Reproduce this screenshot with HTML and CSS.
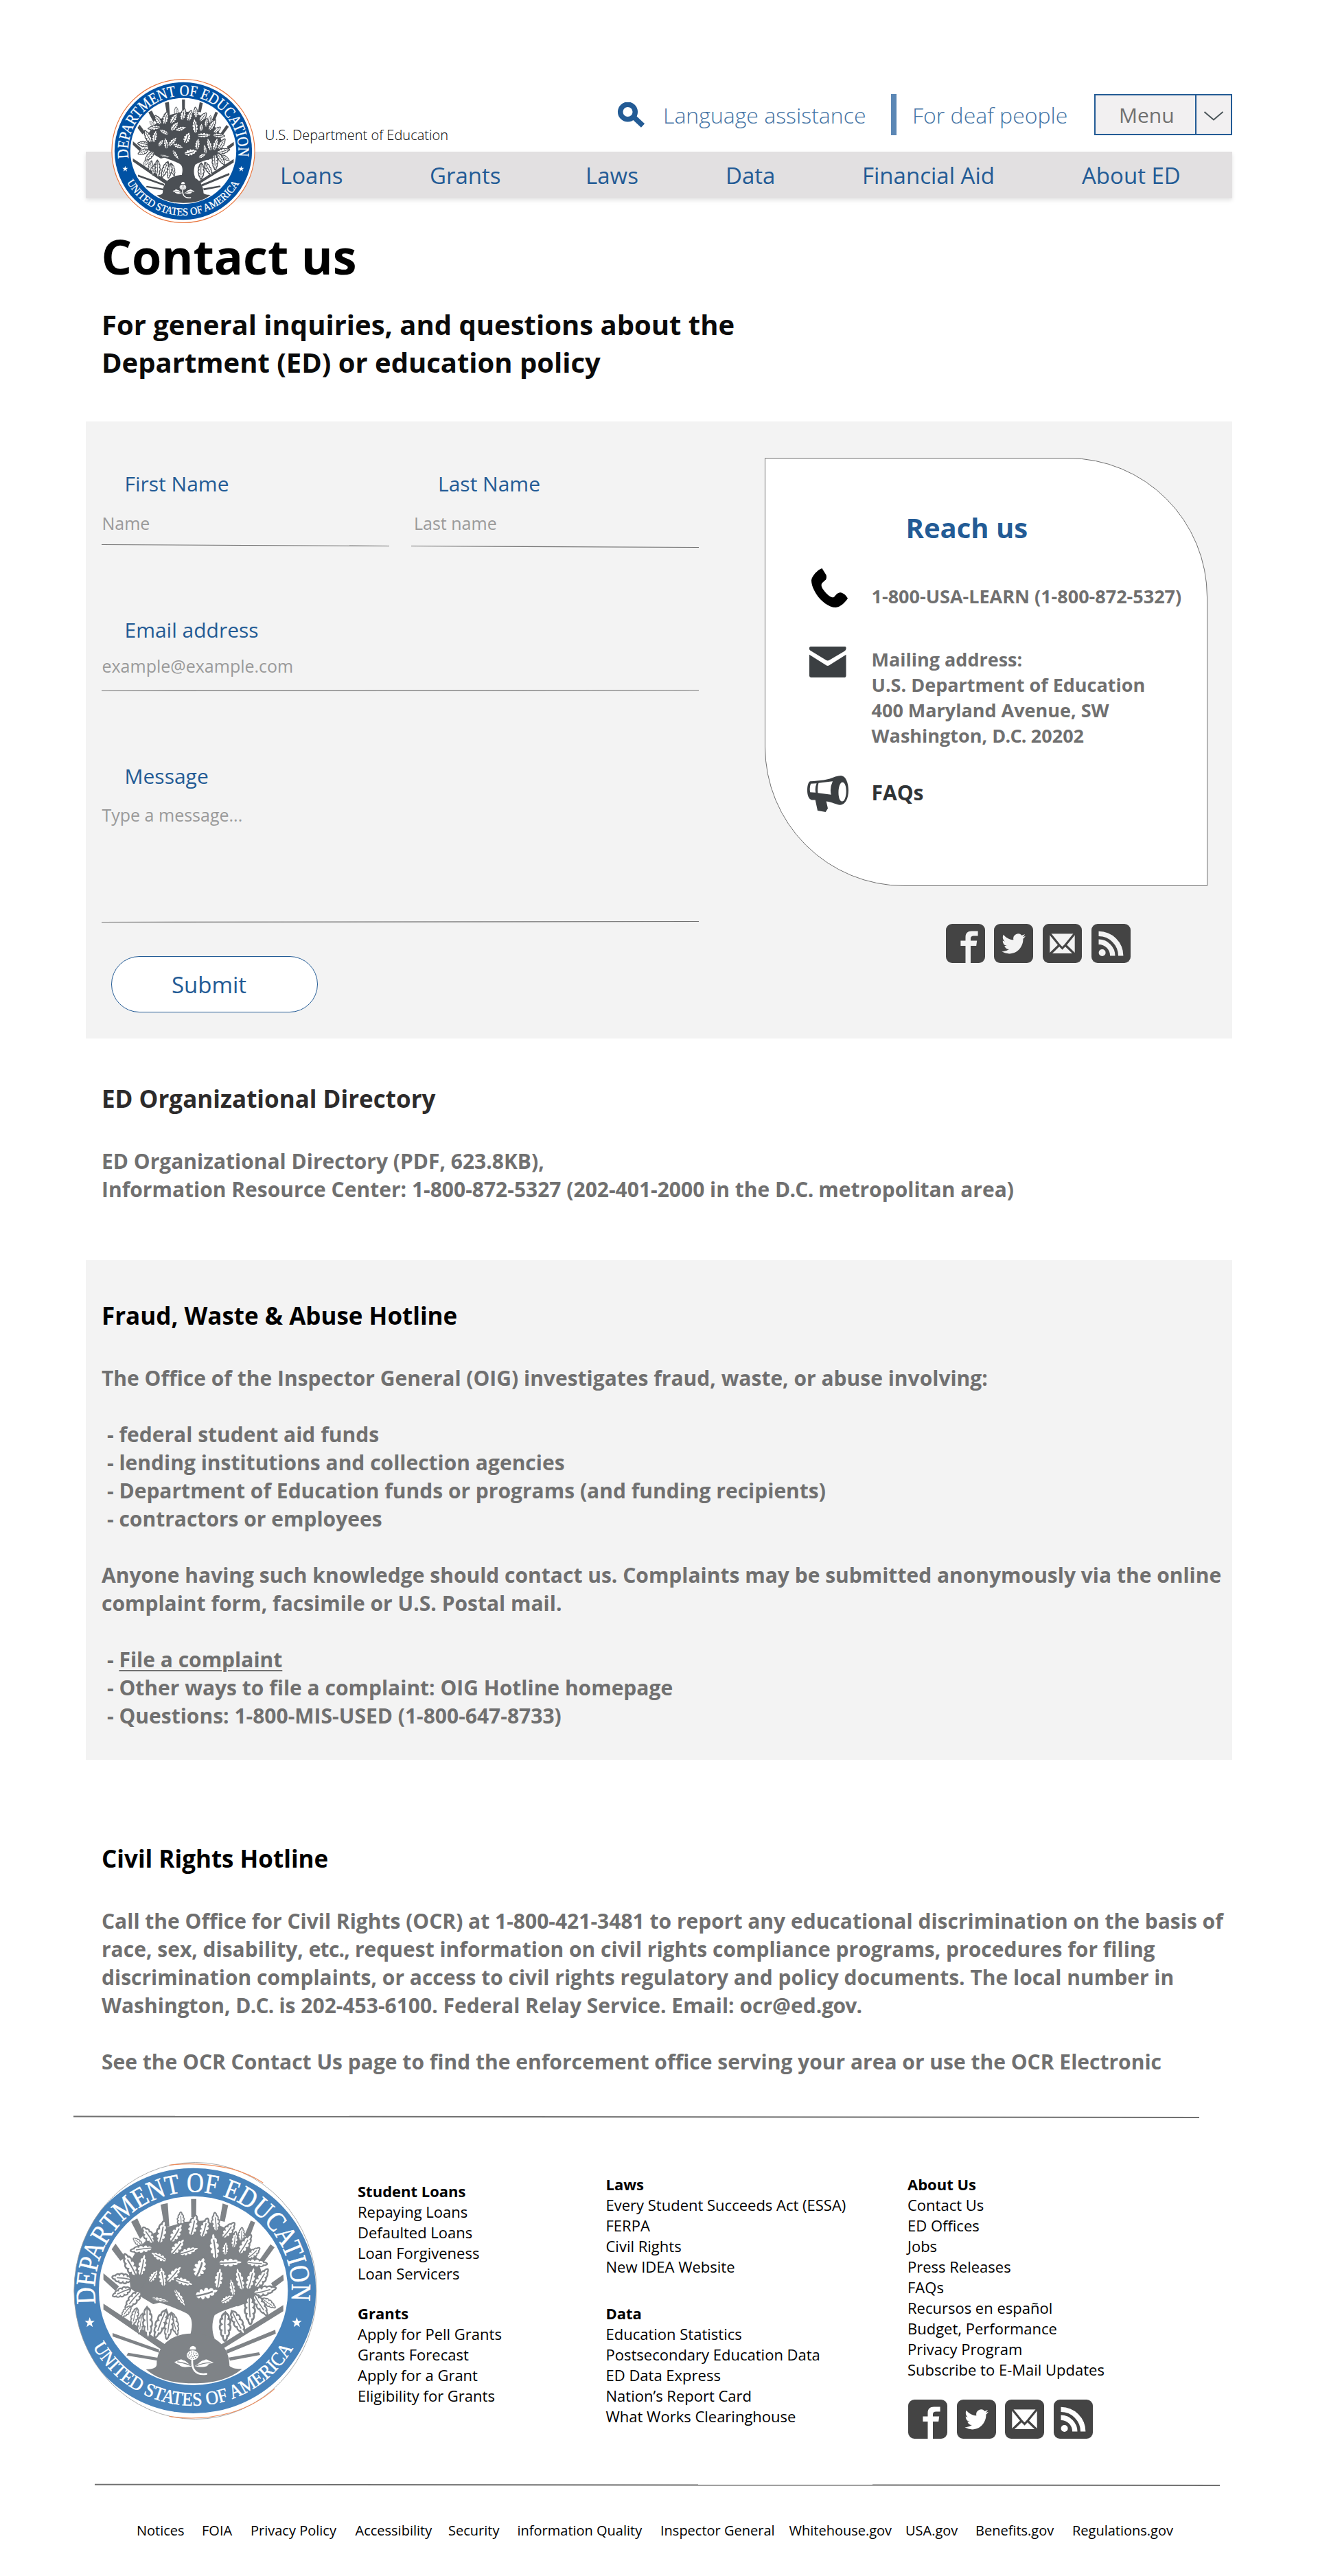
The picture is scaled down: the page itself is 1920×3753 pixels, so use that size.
FILE: index.html
```
<!DOCTYPE html>
<html lang="en">
<head>
<meta charset="utf-8">
<title>Contact us - U.S. Department of Education</title>
<link rel="stylesheet" href="styles.css">
</head>
<body>

<svg class="sprite" aria-hidden="true">
  <defs>
    <path id="arc-top" d="M149 708 A430 430 0 1 1 1001 708"/>
    <path id="arc-bottom" d="M136 896 A503 503 0 0 0 1014 896"/>
    <g id="leaf">
      <path class="leaf-shape" d="M0 50C-8 42-20 40-14 28C-26 26-24 12-17 8C-28 2-24-12-16-14C-22-24-14-34-9-34C-10-42-4-50 0-50C4-50 10-42 9-34C14-34 22-24 16-14C24-12 28 2 17 8C24 12 26 26 14 28C20 40 8 42 0 50Z"/>
      <path class="leaf-rib" d="M0 50Q4 10 0-26"/>
    </g>
    <path id="star" d="M0-23 5.5-7H22L9 3.500 13.500 20 0 10-13.500 20-9 3.500-22-7H-5.500Z"/>
    <g id="seal">
      <circle cx="575" cy="651" r="536" fill="var(--band)"/>
      <circle cx="575" cy="651" r="413" fill="#fff"/>
      <g fill="var(--tree)">
        <path d="M565 250H588L587 330H566ZM432 275L463 268 470 370 448 370ZM703 270L727 278 712 350 690 345ZM303 350L330 335 362 405 342 425ZM826 345L845 352 820 420 798 410ZM235 445L218 470 256 520 278 505ZM912 448L930 462 880 530 865 515ZM182 575V603L235 652 250 632ZM968 580L970 606 925 640 915 618ZM182 708V733L440 912 455 888ZM968 714V741L695 910 690 890ZM222 836V851L425 922 425 908ZM933 822L935 839 722 926 718 910ZM290 922L283 934 418 957 420 944ZM862 920L867 932 735 957 730 943Z"/>
        <path d="M300 640L290 540 330 470 400 400 470 370 540 350 620 345 700 370 790 420 850 500 870 560 880 650 830 690 800 705 770 720 700 700 620 720 560 710 480 690 400 710 350 680Z"/>
        <path d="M560 850C574 800 572 765 545 750C505 728 450 712 395 690L340 655 370 600 560 640 700 640 850 650 830 700C775 715 700 735 668 758C655 790 655 830 668 860Z"/>
        <path d="M368 995C395 995 415 990 415 972C415 900 470 838 570 838C680 838 733 900 733 980C745 992 770 993 788 993C730 1040 660 1056 575 1056C490 1056 420 1040 368 995Z"/>
      </g>
      <g>
        <use href="#leaf" transform="translate(520 340) scale(.65)"/>
        <use href="#leaf" transform="translate(785 405) rotate(5) scale(.6)"/>
        <use href="#leaf" transform="translate(672 352) rotate(-4) scale(.72 .85)"/>
        <use href="#leaf" transform="translate(728 388) rotate(38) scale(.85)"/>
        <use href="#leaf" transform="translate(574 368) rotate(14) scale(.95)"/>
        <use href="#leaf" transform="translate(624 378) rotate(17) scale(.9)"/>
        <use href="#leaf" transform="translate(378 410) rotate(-32) scale(.85)"/>
        <use href="#leaf" transform="translate(437 397) rotate(13) scale(.95 1.05)"/>
        <use href="#leaf" transform="translate(500 400) rotate(32) scale(.95)"/>
        <use href="#leaf" transform="translate(332 438) rotate(-50) scale(.5)"/>
        <use href="#leaf" transform="translate(350 470) rotate(-97) scale(.75 1)"/>
        <use href="#leaf" transform="translate(506 460) rotate(40) scale(.9)"/>
        <use href="#leaf" transform="translate(555 478) rotate(72) scale(.75 .9)"/>
        <use href="#leaf" transform="translate(755 430) rotate(8) scale(.6 .75)"/>
        <use href="#leaf" transform="translate(667 458) rotate(-6) scale(1 1.2)"/>
        <use href="#leaf" transform="translate(715 468) rotate(5) scale(.6)"/>
        <use href="#leaf" transform="translate(800 450) rotate(32) scale(.85 1)"/>
        <use href="#leaf" transform="translate(838 487) rotate(50) scale(.7)"/>
        <use href="#leaf" transform="translate(735 528) rotate(88) scale(.85 1.100)"/>
        <use href="#leaf" transform="translate(850 530) rotate(95) scale(.75 .95)"/>
        <use href="#leaf" transform="translate(425 503) rotate(-62) scale(.7 .8)"/>
        <use href="#leaf" transform="translate(604 550) rotate(22) scale(1.300 .95)"/>
        <use href="#leaf" transform="translate(300 540) rotate(-28) scale(.95 1.100)"/>
        <use href="#leaf" transform="translate(352 540) rotate(12) scale(.85 1)"/>
        <use href="#leaf" transform="translate(262 597) rotate(-82) scale(.9 .85)"/>
        <use href="#leaf" transform="translate(400 588) rotate(35) scale(.65)"/>
        <use href="#leaf" transform="translate(440 592) rotate(-8) scale(.8 .9)"/>
        <use href="#leaf" transform="translate(490 580) rotate(42) scale(.85 .95)"/>
        <use href="#leaf" transform="translate(533 612) rotate(108) scale(.75 .85)"/>
        <use href="#leaf" transform="translate(632 662) rotate(76) scale(1.200 1.100)"/>
        <use href="#leaf" transform="translate(686 598) rotate(8) scale(.85 .95)"/>
        <use href="#leaf" transform="translate(778 602) rotate(-14) scale(.8 1.050)"/>
        <use href="#leaf" transform="translate(826 600) rotate(16) scale(.85 1.050)"/>
        <use href="#leaf" transform="translate(872 598) rotate(34) scale(.85 1)"/>
        <use href="#leaf" transform="translate(885 652) rotate(76) scale(.85 1.050)"/>
        <use href="#leaf" transform="translate(745 638) rotate(-10) scale(.55 .8)"/>
        <use href="#leaf" transform="translate(262 658) rotate(-112) scale(.8 .85)"/>
        <use href="#leaf" transform="translate(312 690) rotate(-138) scale(.85 1)"/>
        <use href="#leaf" transform="translate(515 680) rotate(148) scale(.55 .9)"/>
        <use href="#leaf" transform="translate(430 690) rotate(102) scale(.35 .8)"/>
        <use href="#leaf" transform="translate(722 688) rotate(60) scale(.65)"/>
        <use href="#leaf" transform="translate(282 742) rotate(-140) scale(.6)"/>
        <use href="#leaf" transform="translate(318 765) rotate(-165) scale(.65 .8)"/>
        <use href="#leaf" transform="translate(345 795) rotate(-170) scale(.55 .9)"/>
        <use href="#leaf" transform="translate(375 790) rotate(178) scale(.85 1.350)"/>
        <use href="#leaf" transform="translate(492 795) rotate(165) scale(.7 1)"/>
        <use href="#leaf" transform="translate(432 795) rotate(202) scale(.9 1.300)"/>
        <use href="#leaf" transform="translate(468 805) rotate(190) scale(.75 1.150)"/>
        <use href="#leaf" transform="translate(904 705) rotate(125) scale(.6 .7)"/>
        <use href="#leaf" transform="translate(868 712) rotate(148) scale(.8 1.100)"/>
        <use href="#leaf" transform="translate(822 735) rotate(178) scale(.95 1.250)"/>
        <use href="#leaf" transform="translate(770 790) rotate(152) scale(.85 1.150)"/>
        <use href="#leaf" transform="translate(714 808) rotate(181) scale(1 1.250)"/>
      </g>
      <g class="acorn">
        <path d="M559 908A14 16 0 0 1 587 908Z" fill="#fff"/>
        <ellipse cx="572" cy="933" rx="26" ry="21" fill="#fff"/>
        <ellipse cx="572" cy="933" rx="19" ry="14" fill="none" stroke="var(--tree)" stroke-width="5" stroke-dasharray="4 6"/>
        <ellipse cx="572" cy="933" rx="9" ry="6" fill="none" stroke="var(--tree)" stroke-width="5" stroke-dasharray="4 5"/>
        <path d="M570 955C568 990 580 1022 632 1015" fill="none" stroke="#fff" stroke-width="8" stroke-linecap="round"/>
        <path d="M568 978C550 972 545 955 530 955C518 945 512 958 492 962C500 972 512 972 518 980C538 990 552 982 568 982ZM584 978C600 972 606 955 622 955C634 945 640 958 664 965C652 970 642 968 636 980C616 988 600 984 584 982Z" fill="#fff"/>
        <path d="M505 962Q540 966 566 980M588 980Q615 966 650 966" fill="none" stroke="var(--tree)" stroke-width="4"/>
      </g>
      <use href="#star" x="122" y="790" fill="#fff"/>
      <use href="#star" x="1027" y="790" fill="#fff"/>
      <text class="seal-top"><textPath href="#arc-top" textLength="1455" lengthAdjust="spacingAndGlyphs">DEPARTMENT OF EDUCATION</textPath></text>
      <text class="seal-bottom"><textPath href="#arc-bottom" textLength="1060" lengthAdjust="spacingAndGlyphs">UNITED STATES OF AMERICA</textPath></text>
    </g>
    <symbol id="facebook" viewBox="0 0 57 57">
      <rect width="57" height="57" rx="9" fill="#444"/>
      <path fill="currentColor" d="M28.500 57V32H21.400V24.400H28.500V19.500C28.500 13.500 31.800 10.600 37.500 10.600H46.600V17.500H40.500C37.500 17.500 36 18.500 36 21.500V24.400H45.200L44.200 32H36V57Z"/>
    </symbol>
    <symbol id="twitter" viewBox="0 0 57 57">
      <rect width="57" height="57" rx="9" fill="#444"/>
      <path fill="currentColor" transform="translate(11.400 11) scale(1.440 1.490)" d="M23.953 4.570a10 10 0 01-2.825.775 4.958 4.958 0 002.163-2.723c-.951.555-2.005.959-3.127 1.184a4.920 4.920 0 00-8.384 4.482C7.690 8.095 4.067 6.130 1.640 3.162a4.822 4.822 0 00-.666 2.475c0 1.710.870 3.213 2.188 4.096a4.904 4.904 0 01-2.228-.616v.060a4.923 4.923 0 003.946 4.827 4.996 4.996 0 01-2.212.085 4.936 4.936 0 004.604 3.417 9.867 9.867 0 01-6.102 2.105c-.390 0-.779-.023-1.170-.067a13.995 13.995 0 007.557 2.209c9.053 0 13.998-7.496 13.998-13.985 0-.210 0-.420-.015-.630A9.935 9.935 0 0024 4.590z"/>
    </symbol>
    <symbol id="mail" viewBox="0 0 57 57">
      <rect width="57" height="57" rx="9" fill="#444"/>
      <rect x="10.300" y="14.400" width="36.400" height="28.600" fill="currentColor"/>
      <path fill="none" stroke="#444" stroke-width="3.200" d="M9.500 13L23.700 30.500 28.500 35.500 33.300 30.500 47.500 13M10 44.500L24 31M47 44.500L33 31"/>
    </symbol>
    <symbol id="rss" viewBox="0 0 57 57">
      <rect width="57" height="57" rx="9" fill="#444"/>
      <circle cx="15.600" cy="42" r="5" fill="currentColor"/>
      <path fill="none" stroke="currentColor" stroke-width="7.400" d="M10.500 14.400A32.200 32.200 0 0 1 42.700 46.600M10.500 26.300A20.300 20.300 0 0 1 30.800 46.600"/>
    </symbol>
  </defs>
</svg>

<header class="site-header">
  <div class="top-row">
    <p class="brand">U.S. Department of Education</p>
    <div class="utilities">
      <svg class="search-icon" viewBox="0 0 41 37"><circle cx="15.500" cy="14" r="10.800"/><path d="M22.500 20L37.500 34"/></svg>
      <a>Language assistance</a>
      <span class="bar"></span>
      <a>For deaf people</a>
      <div class="menu">
        <span>Menu</span>
        <span class="menu-toggle"><svg viewBox="0 0 30 16"><path d="M1.500 2L15 13.500 28.500 2"/></svg></span>
      </div>
    </div>
  </div>
  <nav class="main-nav">
    <a>Loans</a><a>Grants</a><a>Laws</a><a>Data</a><a>Financial Aid</a><a>About ED</a>
  </nav>
  <svg class="seal seal-header" viewBox="13 89 1124 1124" role="img" aria-label="Department of Education seal">
    <ellipse cx="575" cy="651" rx="557" ry="559" fill="#fff" stroke="#e8733a" stroke-width="6"/>
    <use href="#seal"/>
  </svg>
</header>

<main>
  <h1>Contact us</h1>
  <p class="subtitle">For general inquiries, and questions about the<br>Department (ED) or education policy</p>

  <section class="contact-panel">
    <form class="contact-form">
      <div class="name-row">
        <div class="field">
          <label>First Name</label>
          <input placeholder="Name">
          <svg class="rule" viewBox="0 0 419 10"><path d="M0 3.500L419 5.500"/></svg>
        </div>
        <div class="field field-last">
          <label>Last Name</label>
          <input placeholder="Last name">
          <svg class="rule" viewBox="0 0 419 10"><path d="M0 5.500L419 7.500"/></svg>
        </div>
      </div>
      <div class="field field-email">
        <label>Email address</label>
        <input placeholder="example@example.com">
        <svg class="rule" viewBox="0 0 870 10"><path d="M0 6.500L870 5.500"/></svg>
      </div>
      <div class="field field-message">
        <label>Message</label>
        <textarea placeholder="Type a message..."></textarea>
        <svg class="rule" viewBox="0 0 870 10"><path d="M0 5.500L870 4.500"/></svg>
      </div>
      <button class="submit" type="button">Submit</button>
    </form>
    <aside class="reach">
      <div class="reach-card">
        <h2>Reach us</h2>
        <div class="reach-row phone-row">
          <svg class="phone-icon" viewBox="216 369 113 112" preserveAspectRatio="none"><path d="M249 369L262 388C264 396 262 401 259 403L249 411C245 417 248 424 253 430C260 439 270 449 280 452C285 453 288 450 291 446C297 440 304 437 310 439C318 441 325 448 329 455C320 468 305 480 292 481C270 481 245 462 233 445C223 431 216 417 216 403C217 392 236 372 249 369Z"/></svg>
          <p>1-800-USA-LEARN (1-800-872-5327)</p>
        </div>
        <div class="reach-row mail-row">
          <svg class="mail-icon" viewBox="210 591 115 89" preserveAspectRatio="none"><path d="M210 598V594Q211 591 214 591H321Q324 591 324 594V598Q323 602 318 605L272 630Q267 633 262 630L214 603Q210 601 210 598ZM210 614L259 643Q267 650 275 643L324 614V675Q324 679 320 680H215Q210 679 210 675Z"/></svg>
          <p>Mailing address:<br>U.S. Department of Education<br>400 Maryland Avenue, SW<br>Washington, <span class="abbr">D.C.</span> 20202</p>
        </div>
        <div class="reach-row faq-row">
          <svg class="faq-icon" viewBox="203 961 128 103" preserveAspectRatio="none"><path fill-rule="evenodd" d="M212 977C240 976 270 973 290 964Q300 961 308 961C323 962 331 982 331 1003C331 1026 321 1044 305 1044C295 1044 280 1036 262 1034L267 1054 260 1064 235 1060 228 1030H217C207 1028 203 1016 203 1003C203 990 206 979 212 977ZM214 984L232 983Q226 996 229 1009L212 1008Q209 995 214 984ZM238 982L282 977Q272 996 277 1015L236 1010Q234 995 238 982ZM312 980C320 980 324 992 324 1005C324 1020 319 1034 311 1034C304 1034 300 1022 300 1009C300 994 305 980 312 980Z"/></svg>
          <p>FAQs</p>
        </div>
      </div>
      <div class="social">
        <svg><use href="#facebook"/></svg><svg><use href="#twitter"/></svg><svg><use href="#mail"/></svg><svg><use href="#rss"/></svg>
      </div>
    </aside>
  </section>

  <section class="info directory">
    <h2>ED Organizational Directory</h2>
    <p>ED Organizational Directory (PDF, 623.8KB),<br>Information Resource Center: 1-800-872-5327 (202-401-2000 in the <span class="abbr">D.C.</span> metropolitan area)</p>
  </section>

  <section class="info fraud">
    <h2>Fraud, Waste &amp; Abuse Hotline</h2>
    <p>The Office of the Inspector General (OIG) investigates fraud, waste, or abuse involving:</p>
    <ul>
      <li>- federal student aid funds</li>
      <li>- lending institutions and collection agencies</li>
      <li>- Department of Education funds or programs (and funding recipients)</li>
      <li>- contractors or employees</li>
    </ul>
    <p>Anyone having such knowledge should contact us. Complaints may be submitted anonymously via the online<br>complaint form, facsimile or U.S. Postal mail.</p>
    <ul>
      <li>- <a class="link">File a complaint</a></li>
      <li>- Other ways to file a complaint: OIG Hotline homepage</li>
      <li>- Questions: 1-800-MIS-USED (1-800-647-8733)</li>
    </ul>
  </section>

  <section class="info civil">
    <h2>Civil Rights Hotline</h2>
    <p>Call the Office for Civil Rights (OCR) at 1-800-421-3481 to report any educational discrimination on the basis of<br>race, sex, disability, <span class="abbr">etc.,</span> request information on civil rights compliance programs, procedures for filing<br>discrimination complaints, or access to civil rights regulatory and policy documents. The local number in<br>Washington, <span class="abbr">D.C.</span> is 202-453-6100. Federal Relay Service. Email: ocr@ed.<span class="abbr">gov.</span></p>
    <p>See the OCR Contact Us page to find the enforcement office serving your area or use the OCR Electronic</p>
  </section>
</main>

<footer class="site-footer">
  <svg class="divider divider-top" viewBox="0 0 1640 8"><path d="M0 3.500L1640 5"/></svg>
  <div class="footer-grid">
    <svg class="seal seal-footer" viewBox="52 89 1063 1125" role="img" aria-label="Department of Education seal">
      <clipPath id="footer-clip"><ellipse cx="583.500" cy="651.500" rx="530" ry="561"/></clipPath>
      <g clip-path="url(#footer-clip)"><rect x="52" y="89" width="1063" height="1125" fill="#fff"/><use href="#seal"/></g>
      <ellipse cx="583.500" cy="651.500" rx="530" ry="561" fill="none" stroke="#9a9a9a" stroke-width="2.500"/>
      <path d="M470 102Q600 86 740 118 820 140 880 180M470 1200Q600 1222 740 1184 850 1150 930 1080" fill="none" stroke="#f08c5a" stroke-width="3.500"/>
    </svg>
    <div class="footer-col col-loans">
      <div class="links"><b>Student Loans</b><a>Repaying Loans</a><a>Defaulted Loans</a><a>Loan Forgiveness</a><a>Loan Servicers</a></div>
      <div class="links"><b>Grants</b><a>Apply for Pell Grants</a><a>Grants Forecast</a><a>Apply for a Grant</a><a>Eligibility for Grants</a></div>
    </div>
    <div class="footer-col col-laws">
      <div class="links"><b>Laws</b><a>Every Student Succeeds Act (ESSA)</a><a>FERPA</a><a>Civil Rights</a><a>New IDEA Website</a></div>
      <div class="links"><b>Data</b><a>Education Statistics</a><a>Postsecondary Education Data</a><a>ED Data Express</a><a>Nation’s Report Card</a><a>What Works Clearinghouse</a></div>
    </div>
    <div class="footer-col col-about">
      <div class="links"><b>About Us</b><a>Contact Us</a><a>ED Offices</a><a>Jobs</a><a>Press Releases</a><a>FAQs</a><a>Recursos en español</a><a>Budget, Performance</a><a>Privacy Program</a><a>Subscribe to E-Mail Updates</a></div>
      <div class="social">
        <svg><use href="#facebook"/></svg><svg><use href="#twitter"/></svg><svg><use href="#mail"/></svg><svg><use href="#rss"/></svg>
      </div>
    </div>
  </div>
  <svg class="divider divider-bottom" viewBox="0 0 1639 8"><path d="M0 3.700L1639 5"/></svg>
  <nav class="legal">
    <a>Notices</a><a>FOIA</a><a>Privacy Policy</a><a>Accessibility</a><a>Security</a><a>information Quality</a><a>Inspector General</a><a>Whitehouse.gov</a><a>USA.gov</a><a>Benefits.gov</a><a>Regulations.gov</a>
  </nav>
</footer>
</body>
</html>
```
FILE: styles.css
```
* { box-sizing: border-box; }

body {
  margin: 0;
  width: 1920px;
  height: 3753px;
  overflow: hidden;
  background: #fff;
  color: #000;
  font-family: "Open Sans", sans-serif;
}

h1, h2, p, ul { margin: 0; padding: 0; }
ul { list-style: none; }
svg { display: block; }
.sprite { position: absolute; width: 0; height: 0; }

/* Seal artwork */
.seal-header { --band: #0052a4; --tree: #4b4f54; }
.seal-footer { --band: #4883bb; --tree: #7f8387; }
.leaf-shape { fill: #fff; stroke: var(--tree); stroke-width: 8; }
.leaf-rib { fill: none; stroke: var(--tree); stroke-width: 6; }
.seal-top, .seal-bottom {
  font-family: "Liberation Serif", serif;
  fill: #fff;
  stroke: #fff;
  stroke-width: 1.5;
}
.seal-top { font-size: 122px; }
.seal-bottom { font-size: 84px; }

/* Header */
.site-header {
  position: relative;
  width: 1670px;
  margin-left: 125px;
}
.top-row {
  display: flex;
  justify-content: space-between;
  height: 221px;
  padding-top: 137px;
}
.brand {
  margin: 46px 0 0 261px;
  font-size: 20px;
  font-weight: 300;
}
.utilities {
  display: grid;
  grid-template-columns: 67px 332px 31px 265px 201px;
  align-items: center;
  height: 60px;
  color: #235b95;
  font-size: 32px;
  font-weight: 300;
  white-space: nowrap;
}
.utilities a { opacity: .85; }
.search-icon {
  width: 41px;
  height: 37px;
  fill: none;
  stroke: #235b95;
  stroke-width: 7.5;
}
.bar { width: 8px; height: 60px; background: #5b87b5; }
.menu {
  display: grid;
  grid-template-columns: 145px 1fr;
  align-items: center;
  height: 60px;
  border: 2px solid #235b95;
  background: #f2f0f1;
  color: #707070;
  font-size: 30px;
  font-weight: 400;
}
.menu > :first-child { padding-left: 34px; }
.menu-toggle {
  display: flex;
  align-items: center;
  justify-content: center;
  height: 100%;
  border-left: 2px solid #235b95;
}
.menu-toggle svg {
  width: 30px;
  height: 16px;
  margin-top: 4px;
  fill: none;
  stroke: #4a5458;
  stroke-width: 2;
}
.main-nav {
  display: grid;
  grid-template-columns: 218px 227px 204px 199px 320px auto;
  align-items: center;
  height: 68px;
  padding-left: 283px;
  background: #e2e0e1;
  box-shadow: 0 3px 6px rgba(0, 0, 0, .1);
  color: #235b95;
  font-size: 33px;
}
.seal-header {
  position: absolute;
  left: 37px;
  top: 115px;
  width: 210px;
  height: 210px;
}

/* Intro */
main { margin-left: 125px; width: 1670px; }
h1 {
  margin: 37px 0 24px 22.5px;
  font-size: 70px;
  line-height: 95px;
}
.subtitle {
  margin-left: 23px;
  color: #0b0b0b;
  font-size: 40px;
  font-weight: 700;
  line-height: 55px;
}

/* Contact panel */
.contact-panel {
  display: flex;
  height: 899px;
  margin-top: 59px;
  background: #f3f3f3;
}
.contact-form {
  width: 893px;
  padding: 70px 0 0 23px;
}
.name-row { display: flex; gap: 32px; }
.field { display: flex; flex-direction: column; }
.name-row .field { width: 419px; }
.field label {
  padding-left: 33.5px;
  color: #235b95;
  font-size: 30px;
  line-height: 41px;
}
.field input, .field textarea {
  height: 34px;
  margin: 20px 0 0;
  padding: 0 0 0 .5px;
  border: 0;
  outline: 0;
  background: none;
  font: 25px/34px "Open Sans", sans-serif;
  resize: none;
}
.field ::placeholder { color: #9a9a9a; opacity: 1; }
.field-last label { padding-left: 39px; }
.field-last input { padding-left: 4px; }
.rule {
  height: 10px;
  margin-top: 11px;
  fill: none;
  stroke: #707070;
  stroke-width: 1.2;
}
.field-email { margin-top: 97px; }
.field-email input { margin-top: 15px; }
.field-email .rule { margin-top: 13px; }
.field-message { margin-top: 100px; }
.field-message textarea { height: 168px; margin-top: 19px; }
.field-message .rule { margin-top: 0; }
.submit {
  width: 301px;
  height: 82px;
  margin: 45px 0 0 14px;
  padding: 0 16px 0 0;
  border: 1px solid #235b95;
  border-radius: 41px;
  background: #fff;
  color: #235b95;
  font: 33px "Open Sans", sans-serif;
}

.reach { padding: 53px 0 0 96px; }
.reach-card {
  width: 645px;
  height: 624px;
  padding: 74px 0 0 60px;
  border: 1px solid #707070;
  border-radius: 0 203px 0 203px;
  background: #fff;
  color: #707070;
  font-size: 27px;
  font-weight: 700;
  line-height: 37px;
}
.reach-card h2 {
  margin-left: 144.5px;
  color: #235b95;
  font-size: 40px;
  line-height: 54px;
}
.reach-row {
  display: grid;
  grid-template-columns: 94.5px auto;
  align-items: start;
}
.phone-row { height: 58px; margin-top: 32px; }
.phone-row p { margin-top: 22px; }
.phone-icon { width: 53px; height: 57px; margin-left: 7px; }
.mail-row { margin-top: 56px; }
.mail-icon { width: 54px; height: 45px; margin-left: 4px; fill: #3b3f42; }
.faq-row { margin-top: 40px; color: #303437; font-size: 30px; line-height: 41px; }
.faq-row p { margin-top: 4px; }
.faq-icon { width: 60px; height: 53px; margin-left: 1px; fill: #3b3f42; }

.social { display: flex; gap: 13.7px; color: #f3f3f3; }
.social svg { width: 57px; height: 57px; }
.reach .social { margin: 55px 0 0 263.5px; }

/* Text sections */
.info {
  padding-left: 23px;
  color: #707070;
  font-size: 30px;
  font-weight: 700;
  line-height: 41px;
  white-space: nowrap;
}
.info h2 {
  margin-bottom: 46px;
  color: #000;
  font-size: 35px;
  line-height: 48px;
}
.info ul { margin: 41px 0; padding-left: 8px; }
.abbr { letter-spacing: -.75px; }
.directory { height: 323px; padding-top: 64px; }
.directory h2 { color: #2d2b2b; }
.fraud { height: 728px; padding-top: 57px; background: #f3f3f3; }
.link {
  text-decoration: underline;
  text-decoration-thickness: 1.5px;
  text-underline-offset: 4px;
}
.civil { height: 516px; padding-top: 120px; }
.civil p + p { margin-top: 41px; }

/* Footer */
.divider { height: 8px; fill: none; stroke: #707070; stroke-width: 2; }
.divider-top { width: 1640px; margin-left: 107px; }
.divider-bottom { width: 1639px; margin: 61px 0 0 138px; }
.footer-grid {
  display: grid;
  grid-template-columns: 414px 361.5px 439.5px auto;
  height: 467px;
  padding: 62px 0 0 107px;
}
.seal-footer { width: 355px; height: 375px; }
.footer-col { font-size: 22px; line-height: 30px; }
.links { display: flex; flex-direction: column; }
.col-loans { padding-top: 27px; }
.col-loans .links + .links { margin-top: 28px; }
.col-laws { padding-top: 17px; }
.col-laws .links + .links { margin-top: 38px; }
.col-about { padding-top: 17px; }
.site-footer .social { margin: 29px 0 0 1px; color: #fff; }
.legal {
  display: grid;
  grid-template-columns: 95px 71px 152.5px 135.5px 100.5px 208.5px 187.5px 169.5px 102px 141px auto;
  margin: 49px 0 0 199px;
  font-size: 20px;
  line-height: 28px;
  white-space: nowrap;
}
```
